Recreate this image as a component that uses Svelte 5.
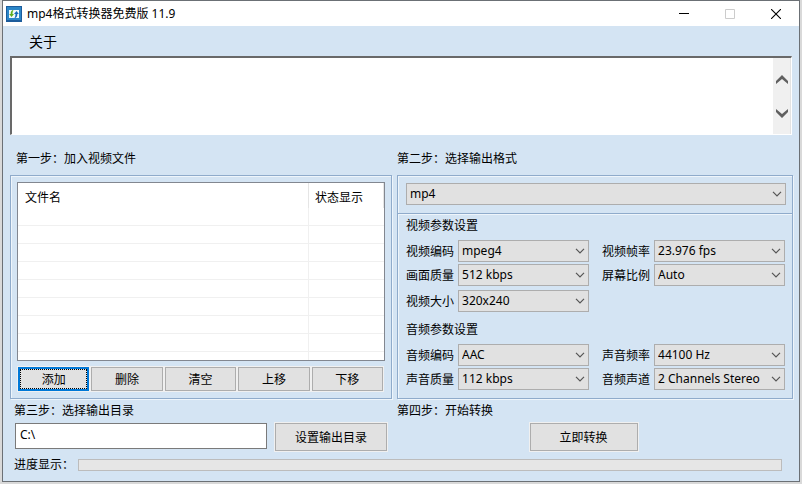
<script>
	let log = $state('');
	let format = $state('mp4');
	let outputDir = $state('C:\\');
	let progress = $state(0);

	let rows = $state(Array.from({ length: 9 }, () => ({ name: '', status: '' })));

	const fileActions = ['添加', '删除', '清空', '上移', '下移'];

	const sections = [
		{
			title: '视频参数设置',
			left: [
				{ id: 'vcodec', label: '视频编码', value: 'mpeg4' },
				{ id: 'vquality', label: '画面质量', value: '512 kbps' },
				{ id: 'vsize', label: '视频大小', value: '320x240' }
			],
			right: [
				{ id: 'fps', label: '视频帧率', value: '23.976 fps' },
				{ id: 'aspect', label: '屏幕比例', value: 'Auto' }
			]
		},
		{
			title: '音频参数设置',
			left: [
				{ id: 'acodec', label: '音频编码', value: 'AAC' },
				{ id: 'aquality', label: '声音质量', value: '112 kbps' }
			],
			right: [
				{ id: 'rate', label: '声音频率', value: '44100 Hz' },
				{ id: 'channels', label: '音频声道', value: '2 Channels Stereo' }
			]
		}
	];
</script>

{#snippet combo(id, value, label)}
	<div class="combo">
		<select {id} aria-label={label}>
			<option>{value}</option>
		</select>
		<svg width="10" height="6" viewBox="0 0 10 6"><path d="M1 .8l4 4 4-4" fill="none" stroke="#555" stroke-width="1.2" /></svg>
	</div>
{/snippet}

{#snippet field(f)}
	<div class="field">
		<label for={f.id}>{f.label}</label>
		{@render combo(f.id, f.value, f.label)}
	</div>
{/snippet}

<div class="window">
	<header>
		<svg class="logo" width="16" height="16" viewBox="0 0 16 16">
			<rect width="16" height="16" fill="#1c5c9c" />
			<rect x="1" y="1" width="14" height="13" fill="#2b86c8" />
			<rect x="3" y="4" width="10" height="8" fill="#eef7fb" />
			<path d="M7.500 4C5.500 4 4.500 6 4.700 8H3.200l2.300 3L8 8H6.500c0-1.500.2-2.500 1-4z" fill="#5fae1e" />
			<path d="M8.500 12c2 0 3-2 2.800-4h1.500l-2.300-3L8 8h1.500c0 1.500-.2 2.500-1 4z" fill="#1468b8" />
		</svg>
		<h1>mp4格式转换器免费版 11.9</h1>
		<div class="controls">
			<button aria-label="最小化">
				<svg width="10" height="10" viewBox="0 0 10 10"><path d="M0 4.500h10" stroke="#000" /></svg>
			</button>
			<button aria-label="最大化" disabled>
				<svg width="10" height="10" viewBox="0 0 10 10"><path d="M.5.5h9v9h-9z" fill="none" stroke="#ccc" /></svg>
			</button>
			<button aria-label="关闭">
				<svg width="10" height="10" viewBox="0 0 10 10"><path d="M0 0l10 10M10 0L0 10" stroke="#000" stroke-width="1.1" /></svg>
			</button>
		</div>
	</header>

	<nav><button>关于</button></nav>

	<div class="log">
		<textarea aria-label="日志" bind:value={log}></textarea>
		<div class="scroll">
			<button aria-label="向上滚动">
				<svg width="12" height="10" viewBox="0 0 12 10"><path d="M0 9V6l6-6 6 6v3L6 4z" fill="#606060" /></svg>
			</button>
			<button aria-label="向下滚动">
				<svg width="12" height="10" viewBox="0 0 12 10"><path d="M0 1v3l6 6 6-6V1L6 6z" fill="#606060" /></svg>
			</button>
		</div>
	</div>

	<main>
		<section>
			<h2 class="indent">第一步：加入视频文件</h2>
			<div class="group files">
				<div class="list">
					<table>
						<thead>
							<tr><th>文件名</th><th class="status">状态显示</th></tr>
						</thead>
						<tbody>
							{#each rows as row}
								<tr><td>{row.name}</td><td>{row.status}</td></tr>
							{/each}
						</tbody>
					</table>
				</div>
				<div class="actions">
					{#each fileActions as action, i}
						<button class="btn" class:current={i === 0}>{action}</button>
					{/each}
				</div>
			</div>
		</section>

		<section>
			<h2>第二步：选择输出格式</h2>
			<div class="group">
				<div class="format">
					{@render combo('format', format, '输出格式')}
				</div>
				<div class="settings">
					{#each sections as s}
						<h3>{s.title}</h3>
						<div class="params">
							<div class="stack">
								{#each s.left as f}{@render field(f)}{/each}
							</div>
							<div class="stack">
								{#each s.right as f}{@render field(f)}{/each}
							</div>
						</div>
					{/each}
				</div>
			</div>
		</section>
	</main>

	<div class="bottom">
		<section>
			<label class="step" for="dir">第三步：选择输出目录</label>
			<div class="row">
				<input id="dir" type="text" bind:value={outputDir} />
				<button class="btn large">设置输出目录</button>
			</div>
		</section>
		<section>
			<h2>第四步：开始转换</h2>
			<div class="row start">
				<button class="btn large convert">立即转换</button>
			</div>
		</section>
	</div>

	<footer>
		<label for="progress">进度显示：</label>
		<progress id="progress" max="100" value={progress}></progress>
	</footer>
</div>

<style>
	:global(body) {
		background: #d9d9d9;
	}
	.window {
		margin: 0 2px 2px;
		border: 1px solid #6b7075;
		background: #d4e4f3;
		color: #000;
		font-family: 'Noto Sans', 'Noto Sans CJK SC', sans-serif;
		font-size: 12px;
		line-height: 16px;
	}
	button,
	input,
	select,
	textarea {
		box-sizing: border-box;
		margin: 0;
		font: inherit;
		color: inherit;
	}
	h1,
	h2,
	h3 {
		margin: 0;
		font-size: 12px;
		font-weight: normal;
	}

	header {
		display: flex;
		align-items: center;
		height: 25px;
		padding-left: 3px;
		background: #fff;
	}
	h1 {
		margin-left: 5px;
		flex: 1;
	}
	.controls {
		display: flex;
	}
	.controls button {
		display: flex;
		align-items: center;
		justify-content: center;
		width: 46px;
		height: 25px;
		padding: 0;
		border: 0;
		background: none;
	}

	nav {
		height: 30px;
		padding-left: 26px;
	}
	nav button {
		height: 32px;
		padding: 0;
		border: 0;
		background: none;
		font-size: 14px;
	}

	.log {
		display: flex;
		height: 76px;
		margin: 0 7px;
		border: 1px solid #fff;
		border-top: 2px solid #696969;
		border-left: 2px solid #696969;
		background: #fff;
	}
	textarea {
		flex: 1;
		padding: 2px;
		border: 0;
		resize: none;
		outline: none;
	}
	.scroll {
		display: flex;
		flex-direction: column;
		justify-content: center;
		gap: 23px;
		width: 17px;
		border-right: 1px solid #e3e3e3;
		background: #f0f0f0;
	}
	.scroll button {
		display: flex;
		justify-content: center;
		padding: 0;
		border: 0;
		background: none;
	}

	main,
	.bottom {
		display: grid;
		grid-template-columns: 382fr 396fr;
		gap: 5px;
		margin: 0 6px 0 7px;
	}
	main {
		padding-top: 16px;
	}
	main h2 {
		padding-bottom: 8px;
	}
	.indent {
		padding-left: 6px;
	}
	section {
		display: flex;
		flex-direction: column;
		min-width: 0;
	}
	.group {
		flex: 1;
		border: 1px solid #8fabcb;
		box-shadow: inset 1px 1px #eef5fb, 1px 1px #eef5fb;
	}
	.files {
		padding: 6px;
	}

	.list {
		height: 177px;
		overflow: hidden;
		border: 1px solid #828790;
		background: #fff;
	}
	table {
		width: 100%;
		table-layout: fixed;
		border-collapse: separate;
		border-spacing: 0;
	}
	th {
		height: 25px;
		padding: 4px 0 0 7px;
		box-sizing: border-box;
		border-right: 1px solid #e5e5e5;
		text-align: left;
		font-weight: normal;
	}
	.status {
		width: 75px;
		padding-left: 6px;
	}
	td {
		height: 18px;
		padding: 0;
		box-sizing: border-box;
		border-bottom: 1px solid #f0f0f0;
	}
	td:first-child {
		border-right: 1px solid #f0f0f0;
	}

	.actions {
		display: grid;
		grid-template-columns: repeat(5, 1fr);
		gap: 2px;
		padding: 6px 2px 0 1px;
	}
	.btn {
		height: 24px;
		padding: 2px 0 0;
		border: 1px solid #adadad;
		background: #e1e1e1;
		box-shadow: 0 0 0 1px #f0f0f0;
	}
	.btn.current {
		border: 2px solid #0078d7;
		outline: 1px dotted #000;
		outline-offset: -3px;
	}
	.btn.large {
		width: 112px;
		height: 28px;
	}

	.format {
		padding: 7px 6px 8px 8px;
		border-bottom: 1px solid #8fabcb;
		box-shadow: 0 1px #eef5fb;
	}
	.settings {
		padding: 4px 7px 8px 8px;
	}
	h3 {
		padding-bottom: 6px;
	}
	.params {
		display: grid;
		grid-template-columns: 1fr 1fr;
		gap: 13px;
	}
	.params + h3 {
		padding-top: 10px;
	}
	.stack {
		display: flex;
		flex-direction: column;
		gap: 2px;
	}
	.field {
		display: flex;
		gap: 4px;
	}
	.field:nth-child(3) {
		padding-top: 2px;
	}
	.field label {
		padding-top: 4px;
		white-space: nowrap;
	}
	.combo {
		position: relative;
		flex: 1;
		min-width: 0;
	}
	.combo svg {
		position: absolute;
		right: 4px;
		top: 8px;
		pointer-events: none;
	}
	select {
		display: block;
		width: 100%;
		height: 22px;
		padding: 0 16px 0 3px;
		appearance: none;
		border: 1px solid #adadad;
		border-radius: 0;
		background: #e1e1e1;
	}

	.bottom {
		padding-top: 4px;
	}
	.bottom .step {
		padding-left: 4px;
	}
	.row {
		display: flex;
		align-items: flex-start;
		gap: 8px;
		padding: 4px 5px 0;
	}
	input {
		flex: 1;
		min-width: 0;
		height: 26px;
		padding: 0 4px 4px;
		border: 1px solid #7a7a7a;
		background: #fff;
	}
	.start {
		justify-content: center;
		padding-right: 28px;
	}
	.btn.convert {
		width: 108px;
	}

	footer {
		display: flex;
		align-items: center;
		padding: 6px 17px 8px 11px;
	}
	footer label {
		width: 64px;
	}
	progress {
		flex: 1;
		height: 12px;
		box-sizing: border-box;
		appearance: none;
		border: 1px solid #bcbcbc;
		background: #e6e6e6;
	}
	progress::-webkit-progress-bar {
		background: #e6e6e6;
	}
	progress::-webkit-progress-value {
		background: #06b025;
	}
</style>
